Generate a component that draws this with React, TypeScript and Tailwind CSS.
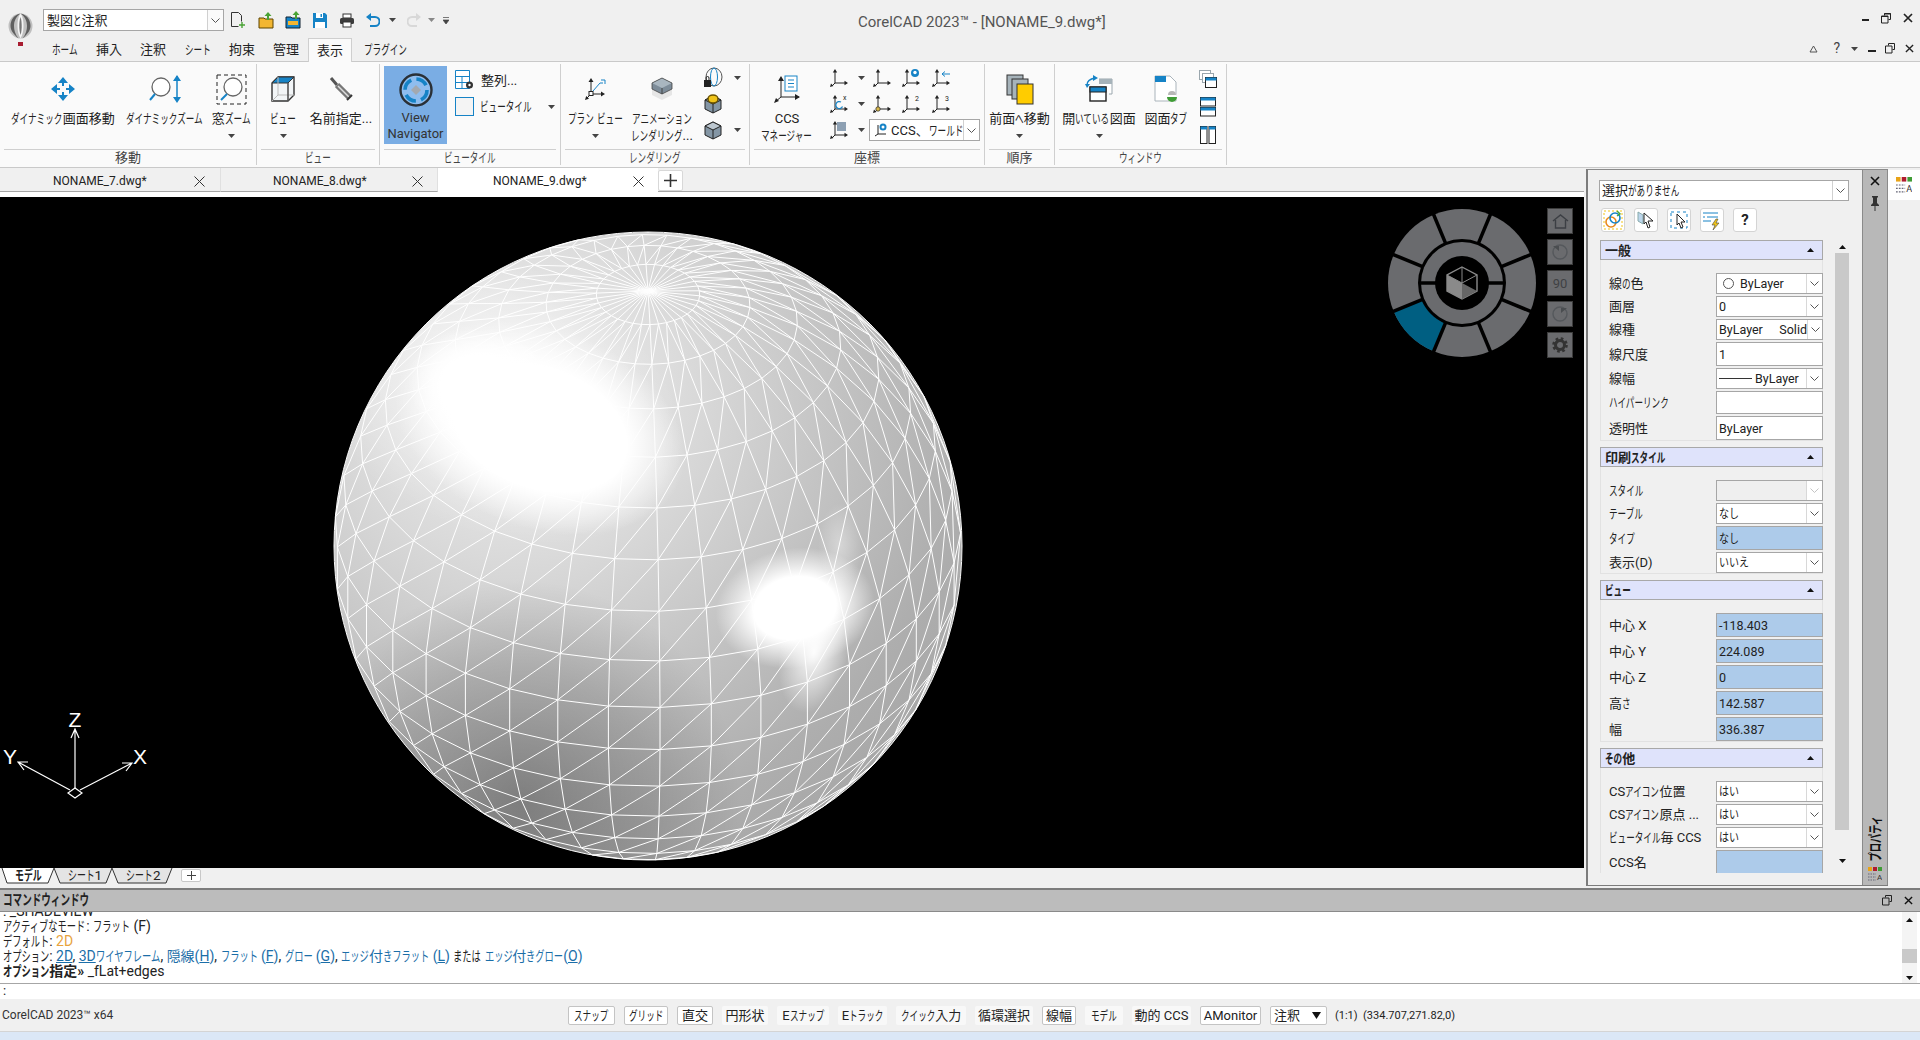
import type { ReactNode } from "react";

// Meiryo-style squeezed kana: kanji stay full width, kana runs get narrowed
function T({ children, wide = false }: { children: string; wide?: boolean }) {
  const parts = children.split(/([\u3040-\u30ff]+)/);
  return (
    <span className="whitespace-pre">
      {parts.map((p, i) =>
        /^[\u3040-\u30ff]+$/.test(p) ? (
          <span
            key={i}
            className={`inline-block origin-left whitespace-nowrap ${wide ? "scale-x-[.8]" : "scale-x-[.66]"}`}
            style={{ width: `${p.length * (wide ? 0.8 : 0.66)}em` }}
          >
            {p}
          </span>
        ) : (
          p
        )
      )}
    </span>
  );
}

const Caret = ({ up = false, c = "#444" }: { up?: boolean; c?: string }) => (
  <svg width="7" height="4" viewBox="0 0 7 4" className="shrink-0">
    <path d={up ? "M0 4L3.5 0 7 4z" : "M0 0h7L3.5 4z"} fill={c} />
  </svg>
);

const Chevron = ({ c = "#555" }: { c?: string }) => (
  <svg width="9" height="5" viewBox="0 0 9 5">
    <path d="M.5.5l4 4 4-4" fill="none" stroke={c} />
  </svg>
);

// ---- ribbon icons ----
const MoveIcon = () => (
  <svg width="26" height="26" viewBox="0 0 26 26">
    <path d="M13 1l5 6h-4v3h-2V7H8zM13 25l5-6h-4v-3h-2v3H8zM1 13l6-5v4h3v2H7v4zM25 13l-6-5v4h-3v2h3v4z" fill="#1683c6" />
  </svg>
);
const DynZoomIcon = () => (
  <svg width="32" height="30" viewBox="0 0 32 30">
    <circle cx="12" cy="13" r="9" fill="#fff" stroke="#666" strokeWidth="1.3" />
    <path d="M6 20l-5 6" stroke="#1683c6" strokeWidth="2" />
    <path d="M28 2v25" stroke="#1683c6" strokeWidth="1.5" />
    <path d="M28 1l4 6h-8zM28 29l4-6h-8z" fill="#1683c6" />
  </svg>
);
const WinZoomIcon = () => (
  <svg width="31" height="31" viewBox="0 0 31 31">
    <rect x="1" y="1" width="29" height="29" fill="none" stroke="#222" strokeDasharray="4 3" />
    <circle cx="17" cy="13" r="9" fill="#fff" stroke="#666" strokeWidth="1.3" />
    <path d="M11 20l-6 6" stroke="#1683c6" strokeWidth="2" />
  </svg>
);
const CubeIcon = () => (
  <svg width="26" height="28" viewBox="0 0 26 28">
    <path d="M2 8l6-6h16v18l-6 6H2z" fill="#f2f5f7" stroke="#333" strokeWidth="1.4" />
    <path d="M2 8l6-6h16l-6 6z" fill="#1683c6" stroke="#333" />
    <path d="M18 8v18M8 2v18l-6 6M8 20h16" fill="none" stroke="#bbb" />
    <path d="M18 8v18" stroke="#333" strokeWidth="1.2" />
  </svg>
);
const PenIcon = () => (
  <svg width="24" height="26" viewBox="0 0 24 26">
    <path d="M2 2l6 7" stroke="#555" strokeWidth="3" />
    <path d="M8 9l12 12" stroke="#777" strokeWidth="6" />
    <path d="M9 10l11 11" stroke="#ddd" strokeWidth="1.5" />
    <path d="M18 24l5-5" stroke="#333" strokeWidth="2" />
  </svg>
);
const NavIcon = () => (
  <svg width="34" height="36" viewBox="0 0 34 36">
    <circle cx="17" cy="18" r="15.5" fill="#8fbdee" stroke="#2a3036" strokeWidth="2.4" />
    <circle cx="17" cy="18" r="11" fill="none" stroke="#1683c6" strokeWidth="3.6" strokeDasharray="12 5.3" />
    <path d="M17 13l5 5-5 5-5-5z" fill="#a3a9b0" />
  </svg>
);
const TileIcon = () => (
  <svg width="20" height="20" viewBox="0 0 20 20">
    <path d="M.5.5h14v18H.5zM.5 6.5h14M.5 12.5h14M7 6.5v12" fill="#fff" stroke="#1683c6" />
    <circle cx="14.5" cy="15" r="3.5" fill="#333" />
    <circle cx="14.5" cy="15" r="1.2" fill="#fff" />
  </svg>
);
const Ax = ({ children }: { children?: ReactNode }) => (
  <svg width="18" height="18" viewBox="0 0 18 18" className="shrink-0">
    <path d="M5 2v12M5 14h11M5 14l-3 3" fill="none" stroke="#222" />
    <path d="M5 0l2.200 3.500H2.800zM18 14l-3.500 2.200v-4.400zM0 18l1-3.500 2.500 2.500z" fill="#222" />
    {children}
  </svg>
);
const AnimCube = () => (
  <svg width="22" height="24" viewBox="0 0 22 24">
    <path d="M11 1l10 5v12l-10 5-10-5V6z" fill="#e6e6e6" />
    <path d="M11 1l10 5v6l-10 5-10-5V6z" fill="#7d8c99" />
    <path d="M11 1l10 5-10 5L1 6z" fill="#a9b6c0" />
    <path d="M11 11v6" stroke="#444" />
    <path d="M11 1l10 5v6l-10 5-10-5V6z" fill="none" stroke="#444" strokeWidth=".8" />
  </svg>
);
const SmallCube = ({ ring = false }: { ring?: boolean }) => (
  <svg width="18" height="20" viewBox="0 0 18 20">
    <path d="M9 2l8 4v9l-8 4-8-4V6z" fill="#8496a5" stroke="#222" />
    <path d="M9 2l8 4-8 4-8-4zM9 10v9" fill={ring ? "#8496a5" : "#bcc7d0"} stroke="#222" />
    {ring && <ellipse cx="9" cy="5" rx="5" ry="4" fill="#f0c419" stroke="#6b5300" strokeWidth="1.4" />}
  </svg>
);
const Stack = () => (
  <svg width="28" height="31" viewBox="0 0 28 31">
    <rect x="1" y="1" width="16" height="20" fill="#a6b3ba" stroke="#333" />
    <rect x="6" y="5" width="16" height="20" fill="#a6b3ba" stroke="#333" />
    <rect x="11" y="10" width="16" height="20" fill="#ffcc00" stroke="#333" />
  </svg>
);
const OpenDocs = () => (
  <svg width="28" height="28" viewBox="0 0 28 28">
    <path d="M14 4h13v15h-3" fill="#fff" stroke="#9aa6ad" />
    <rect x="14" y="4" width="13" height="5" fill="#a6b3ba" />
    <rect x="5" y="12" width="16" height="14" fill="#fff" stroke="#222" strokeWidth="1.4" />
    <rect x="5" y="12" width="16" height="5" fill="#1683c6" stroke="#222" />
    <path d="M2 10c0-4 3-6 8-7" fill="none" stroke="#1683c6" strokeWidth="1.4" />
    <path d="M13 3L8 0v6zM2 13l-2-4h5z" fill="#1683c6" />
  </svg>
);
const TabDoc = () => (
  <svg width="24" height="28" viewBox="0 0 24 28">
    <path d="M1 1h15l6 6v19H1z" fill="#fff" stroke="#aab4bb" />
    <rect x="1" y="1" width="11" height="6" fill="#1683c6" />
    <circle cx="18" cy="22" r="5" fill="#fff" />
    <path d="M13 22h10a5 5 0 0 1-10 0z" fill="#3f9c35" />
    <path d="M14 20a4 4 0 0 1 8 0z" fill="#b7b7b7" />
  </svg>
);
const WinA = () => (
  <svg width="18" height="18" viewBox="0 0 18 18">
    <rect x=".5" y=".5" width="11" height="9" fill="#fff" stroke="#9aa6ad" />
    <rect x="3.5" y="3.5" width="11" height="9" fill="#fff" stroke="#9aa6ad" />
    <rect x="6.5" y="7.5" width="11" height="10" fill="#fff" stroke="#222" />
    <rect x="6.5" y="7.5" width="11" height="3" fill="#1683c6" />
  </svg>
);
const WinB = () => (
  <svg width="16" height="20" viewBox="0 0 16 20">
    <rect x=".5" y=".5" width="15" height="8.5" fill="#fff" stroke="#222" />
    <rect x=".5" y=".5" width="15" height="3" fill="#1683c6" />
    <rect x=".5" y="10.5" width="15" height="8.5" fill="#fff" stroke="#222" />
    <rect x=".5" y="10.5" width="15" height="3" fill="#1683c6" />
  </svg>
);
const WinC = () => (
  <svg width="16" height="18" viewBox="0 0 16 18">
    <rect x=".5" y=".5" width="6.5" height="17" fill="#fff" stroke="#222" />
    <rect x=".5" y=".5" width="6.5" height="3" fill="#1683c6" />
    <rect x="9" y=".5" width="6.5" height="17" fill="#fff" stroke="#222" />
    <rect x="9" y=".5" width="6.5" height="3" fill="#1683c6" />
  </svg>
);

// ---- quick access icons ----
const quick = [
  { cls: "ml-[6px]", icon: <svg width="16" height="18" viewBox="0 0 16 18"><path d="M1.5 1.5h7l3 3v6M1.5 1.5v14h7" fill="none" stroke="#333" /><path d="M12 11v6M9 14h6" stroke="#4aa335" strokeWidth="1.4" /></svg> },
  { cls: "ml-[12px]", icon: <svg width="16" height="18" viewBox="0 0 16 18"><path d="M1 7h5l1 1h8v9H1z" fill="#f2b632" stroke="#5d4500" /><path d="M10 1l3.5 4H11v4H9V5H6.5z" fill="#4aa335" /></svg> },
  { cls: "ml-[11px]", icon: <svg width="16" height="18" viewBox="0 0 16 18"><path d="M1 6h5l1 1h8v10H1z" fill="#1683c6" stroke="#123" /><path d="M3 10h10v4H3z" fill="#f2b632" /><path d="M11 0l3.5 4H12v4h-2V4H7.5z" fill="#4aa335" /></svg> },
  { cls: "ml-[11px]", icon: <svg width="16" height="17" viewBox="0 0 16 17"><path d="M1 1h12l2 2v13H1z" fill="#1683c6" /><path d="M4 1h7v5H4zM3 10h10v6H3z" fill="#fff" /><path d="M8.5 2h1.5v3H8.500z" fill="#1683c6" /></svg> },
  { cls: "ml-[11px]", icon: <svg width="16" height="15" viewBox="0 0 16 15"><rect x="4" y="1" width="8" height="4" fill="#fff" stroke="#333" /><rect x="1" y="5" width="14" height="6" rx="1.500" fill="#3c3c3c" /><rect x="4" y="9" width="8" height="5" fill="#fff" stroke="#333" /></svg> },
  { cls: "ml-[11px]", icon: <svg width="14" height="16" viewBox="0 0 14 16"><path d="M3 5h6a4 4 0 0 1 0 9H4" fill="none" stroke="#1683c6" strokeWidth="2" /><path d="M0 5l5-4v8z" fill="#1683c6" /></svg> },
  { cls: "ml-[9px]", icon: <Caret /> },
  { cls: "ml-[11px]", icon: <svg width="14" height="16" viewBox="0 0 14 16"><path d="M11 5H5a4 4 0 0 0 0 9h5" fill="none" stroke="#d8d8d8" strokeWidth="2" /><path d="M14 5L9 1v8z" fill="#d8d8d8" /></svg> },
  { cls: "ml-[7px]", icon: <Caret c="#888" /> },
  { cls: "ml-[8px]", icon: <svg width="6" height="7" viewBox="0 0 6 7"><path d="M0 .5h6M0 3h6L3 7z" fill="#444" stroke="#444" strokeWidth=".7" /></svg> },
];

const ribbonTabs = [
  { t: "ホーム", c: "w-[44px]" }, { t: "挿入", c: "w-[44px]" }, { t: "注釈", c: "w-[44px]" }, { t: "シート", c: "w-[45px]" },
  { t: "拘束", c: "w-[44px]" }, { t: "管理", c: "w-[44px]" },
];

function Group({ w, title, children }: { w: string; title: string; children: ReactNode }) {
  return (
    <div className={`${w} flex flex-col relative shrink-0 px-[4px]`}>
      <div className="h-[87px] flex -mx-[4px]">{children}</div>
      <div className="border-t border-[#cfcfcf] h-[17px] text-center text-[13px] leading-[15px] text-[#444]">
        <T>{title}</T>
      </div>
    </div>
  );
}
const Sep = () => <div className="w-px my-[2px] bg-[#cfcfcf] shrink-0" />;

function Big({ w, icon, l1, l2, caret }: { w: string; icon: ReactNode; l1: string; l2?: string; caret?: boolean }) {
  return (
    <div className={`${w} shrink-0 flex flex-col items-center pt-[11px] whitespace-nowrap`}>
      <div className="h-[32px] flex items-center justify-center">{icon}</div>
      <div className="mt-[5px] h-[17px] text-center"><T>{l1}</T></div>
      <div className="h-[17px] flex items-center justify-center text-center">
        {l2 ? <T>{l2}</T> : caret ? <Caret /> : null}
      </div>
    </div>
  );
}

// ---- properties panel data ----
type Row = { label: string; h: string; kind: "combo" | "text" | "blue" | "off"; value?: ReactNode };
const sections: { title: string; pt: string; mt: string; rows: Row[] }[] = [
  {
    title: "一般", pt: "pt-[13px]", mt: "",
    rows: [
      { label: "線の色", h: "h-[21px]", kind: "combo", value: <span className="flex items-center"><span className="w-[11px] h-[11px] rounded-full border border-[#555] ml-[4px] mr-[6px]" />ByLayer</span> },
      { label: "画層", h: "h-[21px]", kind: "combo", value: "0" },
      { label: "線種", h: "h-[21px]", kind: "combo", value: <span className="flex justify-between w-[88px]"><span>ByLayer</span><span>Solid</span></span> },
      { label: "線尺度", h: "h-[24px]", kind: "text", value: "1" },
      { label: "線幅", h: "h-[21px]", kind: "combo", value: <span className="flex items-center"><span className="w-[33px] h-px bg-[#333] mr-[3px]" />ByLayer</span> },
      { label: "ハイパーリンク", h: "h-[23px]", kind: "text" },
      { label: "透明性", h: "h-[24px]", kind: "text", value: "ByLayer" },
    ],
  },
  {
    title: "印刷スタイル", pt: "pt-[13px]", mt: "mt-[6px]",
    rows: [
      { label: "スタイル", h: "h-[21px]", kind: "off" },
      { label: "テーブル", h: "h-[21px]", kind: "combo", value: "なし" },
      { label: "タイプ", h: "h-[24px]", kind: "blue", value: "なし" },
      { label: "表示(D)", h: "h-[21px]", kind: "combo", value: "いいえ" },
    ],
  },
  {
    title: "ビュー", pt: "pt-[13px]", mt: "mt-[6px]",
    rows: [
      { label: "中心 X", h: "h-[24px]", kind: "blue", value: "-118.403" },
      { label: "中心 Y", h: "h-[24px]", kind: "blue", value: "224.089" },
      { label: "中心 Z", h: "h-[24px]", kind: "blue", value: "0" },
      { label: "高さ", h: "h-[24px]", kind: "blue", value: "142.587" },
      { label: "幅", h: "h-[24px]", kind: "blue", value: "336.387" },
    ],
  },
  {
    title: "その他", pt: "pt-[13px]", mt: "mt-[6px]",
    rows: [
      { label: "CSアイコン位置", h: "h-[21px]", kind: "combo", value: "はい" },
      { label: "CSアイコン原点 ...", h: "h-[21px]", kind: "combo", value: "はい" },
      { label: "ビュータイル毎 CCS", h: "h-[21px]", kind: "combo", value: "はい" },
      { label: "CCS名", h: "h-[24px]", kind: "blue" },
    ],
  },
];

function PropRow({ r }: { r: Row }) {
  const bg = r.kind === "blue" ? "bg-[#adcbea]" : r.kind === "off" ? "bg-[#efefef]" : "bg-white";
  return (
    <div className={`${r.h} flex items-center shrink-0`}>
      <div className="w-[116px] pl-[9px] text-[#222] whitespace-nowrap"><T>{r.label}</T></div>
      <div className={`${bg} h-full w-[107px] border border-[#a6a6a6] flex items-center justify-between overflow-hidden text-[12.5px]`}>
        <div className="pl-[2px] whitespace-nowrap">
          {typeof r.value === "string" ? <T wide>{r.value}</T> : r.value}
        </div>
        {(r.kind === "combo" || r.kind === "off") && (
          <div className="w-[16px] h-full bg-white border-l border-[#d8d8d8] flex items-center justify-center shrink-0">
            <Chevron c={r.kind === "off" ? "#c4c4c4" : "#555"} />
          </div>
        )}
      </div>
    </div>
  );
}

const statusItems = [
  { t: "スナップ", c: "w-[47px]", on: true }, { t: "グリッド", c: "w-[44px]", on: true }, { t: "直交", c: "w-[36px]", on: true },
  { t: "円形状", c: "w-[46px]" }, { t: "Eスナップ", c: "w-[52px]" }, { t: "Eトラック", c: "w-[49px]" }, { t: "クイック入力", c: "w-[70px]" },
  { t: "循環選択", c: "w-[58px]" }, { t: "線幅", c: "w-[34px]", on: true }, { t: "モデル", c: "w-[38px]" }, { t: "動的 CCS", c: "w-[59px]" },
  { t: "AMonitor", c: "w-[61px]", on: true },
];

// ---- sphere mesh ----
const R = 314, CX = 648, CY = 546;
function buildMesh() {
  const bands = 19, lons = 38;
  const beta = (54.3 * Math.PI) / 180;
  const off = (2.2 * Math.PI) / 180;
  const pt = (i: number, k: number) => {
    const a = (i * Math.PI) / bands;
    const l = off + (k * 2 * Math.PI) / lons;
    const x = Math.sin(a) * Math.sin(l), y = Math.cos(a), z = Math.sin(a) * Math.cos(l);
    const yy = y * Math.sin(beta) - z * Math.cos(beta);
    const zz = y * Math.cos(beta) + z * Math.sin(beta);
    return { X: CX + R * x, Y: CY - R * yy, z: zz };
  };
  let d = "";
  const seg = (a: ReturnType<typeof pt>, b: ReturnType<typeof pt>) => {
    if (a.z < -0.01 || b.z < -0.01) return;
    d += `M${a.X.toFixed(1)} ${a.Y.toFixed(1)}L${b.X.toFixed(1)} ${b.Y.toFixed(1)}`;
  };
  for (let i = 0; i < bands; i++) {
    for (let k = 0; k < lons; k++) {
      seg(pt(i, k), pt(i + 1, k));
      if (i + 1 < bands) seg(pt(i + 1, k), pt(i + 1, k + 1));
      if (i > 0 && i + 1 < bands) seg(pt(i + 1, k), pt(i, k + 1));
    }
  }
  return d;
}
const meshPath = buildMesh();

function Sphere() {
  return (
    <svg className="absolute inset-0 w-full h-full" viewBox="0 197 1584 671">
      <defs>
        <clipPath id="ball"><circle cx={CX} cy={CY} r={R} /></clipPath>
        <radialGradient id="base" gradientUnits="userSpaceOnUse" cx="520" cy="390" r="560">
          <stop offset="0" stopColor="#f2f2f2" />
          <stop offset=".3" stopColor="#dadada" />
          <stop offset=".55" stopColor="#c4c4c4" />
          <stop offset=".8" stopColor="#aeaeae" />
          <stop offset="1" stopColor="#a4a4a4" />
        </radialGradient>
        <radialGradient id="dark" gradientUnits="userSpaceOnUse" cx="520" cy="800" r="220">
          <stop offset="0" stopColor="#000" stopOpacity=".3" />
          <stop offset=".6" stopColor="#000" stopOpacity=".14" />
          <stop offset="1" stopColor="#000" stopOpacity="0" />
        </radialGradient>
        <radialGradient id="glow">
          <stop offset=".6" stopColor="#fff" />
          <stop offset="1" stopColor="#fff" stopOpacity="0" />
        </radialGradient>
        <radialGradient id="glowMid">
          <stop offset=".52" stopColor="#fff" />
          <stop offset="1" stopColor="#fff" stopOpacity="0" />
        </radialGradient>
        <radialGradient id="glowSoft">
          <stop offset="0" stopColor="#fff" stopOpacity=".95" />
          <stop offset="1" stopColor="#fff" stopOpacity="0" />
        </radialGradient>
      </defs>
      <g clipPath="url(#ball)">
        <circle cx={CX} cy={CY} r={R} fill="url(#base)" />
        <circle cx={CX} cy={CY} r={R} fill="url(#dark)" />
        <ellipse cx="490" cy="395" rx="205" ry="135" fill="url(#glowSoft)" transform="rotate(25 490 395)" opacity=".75" />
        <ellipse cx="540" cy="428" rx="150" ry="100" fill="url(#glow)" transform="rotate(20 540 428)" />
        <ellipse cx="490" cy="395" rx="85" ry="62" fill="url(#glow)" transform="rotate(22 490 395)" />
        <ellipse cx="795" cy="608" rx="80" ry="60" fill="url(#glowMid)" transform="rotate(-10 795 608)" />
        <ellipse cx="814" cy="652" rx="34" ry="62" fill="url(#glowSoft)" transform="rotate(12 814 652)" />
        <ellipse cx="840" cy="545" rx="22" ry="42" fill="url(#glowSoft)" opacity=".4" />
      </g>
      <path d={meshPath} fill="none" stroke="#fff" strokeWidth="1" />
      <circle cx={CX} cy={CY} r={R} fill="none" stroke="#fff" strokeWidth="1" />
      {/* ucs icon */}
      <g stroke="#fff" strokeWidth="1.2" fill="none">
        <path d="M75 789V730M71 738l4-9 4 9" />
        <path d="M80 790l52-27M122 763h10l-6 8" />
        <path d="M70 790L18 762M28 762h-10l6 8" />
        <path d="M75 788l7 5-7 5-7-5z" />
      </g>
      <g fill="#fff" fontSize="21" fontFamily="'Liberation Sans',sans-serif" textAnchor="middle">
        <text x="75" y="727">Z</text>
        <text x="140" y="764">X</text>
        <text x="10" y="764">Y</text>
      </g>
    </svg>
  );
}

function Wheel() {
  const seps = [22.5, 67.5, 112.5, 157.5, 202.5, 247.5, 292.5, 337.5];
  const p = (r: number, a: number) => `${(r * Math.cos((a * Math.PI) / 180)).toFixed(2)} ${(r * Math.sin((a * Math.PI) / 180)).toFixed(2)}`;
  return (
    <svg width="150" height="150" viewBox="-75 -75 150 150">
      <circle r="74" fill="#6a6b6e" />
      <path d={`M${p(44, 112.5)}L${p(74, 112.5)}A74 74 0 0 1 ${p(74, 157.5)}L${p(44, 157.5)}z`} fill="#005f82" />
      {seps.map((a) => (
        <path key={a} d={`M${p(42, a)}L${p(75, a)}`} stroke="#000" strokeWidth="3.5" />
      ))}
      <circle r="44" fill="#000" />
      <circle r="41" fill="#6a6b6e" />
      <path d="M-42 0h84" stroke="#000" strokeWidth="3.500" />
      <circle r="27" fill="#000" />
      <path d="M0 -16L15 -8V8L0 16L-15 8V-8z" fill="#000" stroke="#8a8a8a" strokeWidth="1.4" />
      <path d="M-15 -8L0 0L0 16L-15 8z" fill="#8a8a8a" />
      <path d="M0 0L15 8V8L0 16z" fill="#666" />
      <path d="M0 0L15 -8M0 0L0 -16M0 0L-15 -8" stroke="#8a8a8a" strokeWidth="1" fill="none" />
    </svg>
  );
}

const navBtn = "w-[26px] h-[26px] bg-[#6a6b6e] border border-[#3c3c3c] flex items-center justify-center";

const docTabs = [
  { n: "NONAME_7.dwg*", c: "w-[219px] pl-[51px] pr-[15px]" },
  { n: "NONAME_8.dwg*", c: "w-[217px] pl-[52px] pr-[14px]" },
];

export default function App() {
  return (
    <div className="w-[1920px] h-[1040px] overflow-hidden flex flex-col bg-[#f0f0f0] text-[13px] leading-[17px] text-[#222] font-['Roboto','Noto_Sans_CJK_JP',sans-serif]">
      {/* title + ribbon tabs */}
      <div className="h-[61px] flex shrink-0">
        <div className="w-[43px] pl-[8px] pt-[13px] shrink-0">
          <svg width="25" height="33" viewBox="0 0 25 33">
            <ellipse cx="12.500" cy="13" rx="12" ry="12.500" fill="#bfbfbf" />
            <path d="M12.500 .5C5 2 2.500 8 2.500 13c0 5 4 9 8 12.500C7 21 6 17 6 13 6 8 8 3.500 12.500.5zM12.500.5C20 2 22.500 8 22.500 13c0 5-4 9-8 12.500 3.500-4.500 4.500-8.500 4.500-12.500 0-5-2-9.500-6.500-12.500z" fill="#5f5f5f" />
            <path d="M12.500 .5c-2.500 3-3 8-3 12.500s1 9 3 12.500c2-3.500 3-8 3-12.500S15 3.500 12.500.5z" fill="#f4f4f4" />
            <path d="M12.500 4c-1 3-1.200 6-1.200 9s.300 6 1.200 9c1-3 1.200-6 1.200-9s-.200-6-1.200-9z" fill="#777" />
            <rect x="10" y="29" width="5" height="4" fill="#a81c30" />
          </svg>
        </div>
        <div className="flex-1 flex flex-col min-w-0">
          <div className="h-[38px] flex items-start pt-[9px] relative">
            <div className="w-[181px] h-[22px] bg-white border border-[#a6a6a6] flex items-center justify-between pl-[3px] shrink-0">
              <T>製図と注釈</T>
              <div className="w-[16px] h-full border-l border-[#d0d0d0] bg-[#fafafa] flex items-center justify-center"><Chevron /></div>
            </div>
            {quick.map((q, i) => (
              <div key={i} className={`${q.cls} h-[22px] flex items-center shrink-0`}>{q.icon}</div>
            ))}
            <div className="ml-[409px] text-[15px] text-[#555] leading-[26px] whitespace-nowrap">CorelCAD 2023™ - [NONAME_9.dwg*]</div>
            <div className="ml-auto flex items-center gap-[12px] h-[18px] pr-[7px]">
              <span className="w-[7px] h-[2px] bg-[#222] mt-[3px]" />
              <svg width="10" height="11" viewBox="0 0 10 11"><path d="M3.500 2.500V.5h6v6H7.500M.5 3h6.500v7H.5z" fill="none" stroke="#222" /><path d="M3 1h7M0 3.500h7" stroke="#222" /></svg>
              <svg width="10" height="10" viewBox="0 0 10 10"><path d="M1 1l8 8M9 1l-8 8" stroke="#222" strokeWidth="1.700" /></svg>
            </div>
          </div>
          <div className="h-[23px] flex items-end relative">
            {ribbonTabs.map((t) => (
              <div key={t.t} className={`${t.c} h-[23px] flex items-center justify-center`}><T>{t.t}</T></div>
            ))}
            <div className="w-[44px] h-[24px] -mb-px bg-[#fafafa] border border-b-0 border-[#cfcfcf] flex items-center justify-center relative z-10"><T>表示</T></div>
            <div className="w-[66px] h-[23px] flex items-center justify-center"><T>プラグイン</T></div>
            <div className="ml-auto flex items-center h-[23px] pr-[6px] pb-[2px]">
              <svg width="9" height="8" viewBox="0 0 9 8"><path d="M1 7l3.500-6L8 7z" fill="none" stroke="#555" /></svg>
              <span className="ml-[15px] text-[14px] text-[#444]">?</span>
              <span className="ml-[11px]"><Caret /></span>
              <span className="ml-[10px] w-[8px] h-[2px] bg-[#222] mt-[5px]" />
              <svg className="ml-[9px]" width="10" height="11" viewBox="0 0 10 11"><path d="M3.500 2.500V.5h6v6H7.500M.5 3h6.500v7H.5z" fill="none" stroke="#222" /></svg>
              <svg className="ml-[10px]" width="9" height="9" viewBox="0 0 10 10"><path d="M1 1l8 8M9 1l-8 8" stroke="#222" strokeWidth="1.500" /></svg>
            </div>
          </div>
        </div>
      </div>

      {/* ribbon */}
      <div className="h-[107px] shrink-0 bg-[#fafafa] border-y border-[#c9c9c9] flex">
        <Group w="w-[256px]" title="移動">
          <div className="w-[4px] shrink-0" />
          <Big w="w-[118px]" icon={<MoveIcon />} l1="ダイナミック画面移動" />
          <Big w="w-[86px]" icon={<DynZoomIcon />} l1="ダイナミックズーム" />
          <Big w="w-[46px]" icon={<WinZoomIcon />} l1="窓ズーム" caret />
        </Group>
        <Sep />
        <Group w="w-[122px]" title="ビュー">
          <Big w="w-[52px]" icon={<CubeIcon />} l1="ビュー" caret />
          <Big w="w-[64px]" icon={<PenIcon />} l1="名前指定..." />
        </Group>
        <Sep />
        <Group w="w-[180px]" title="ビュータイル">
          <div className="ml-[4px] mt-[4px] w-[63px] h-[78px] bg-[#7aade4] flex flex-col items-center pt-[6px] shrink-0 text-[#333]">
            <div className="h-[36px] flex items-center"><NavIcon /></div>
            <div className="mt-[1px]">View</div>
            <div className="-mt-[1px]">Navigator</div>
          </div>
          <div className="ml-[8px] pt-[8px] flex flex-col gap-[7px] flex-1">
            <div className="flex items-center gap-[6px]"><TileIcon /><T>整列...</T></div>
            <div className="flex items-center gap-[6px]">
              <span className="w-[19px] h-[19px] border border-[#1683c6] bg-[#f4f4f4]" />
              <T>ビュータイル</T>
              <span className="ml-[11px]"><Caret /></span>
            </div>
          </div>
        </Group>
        <Sep />
        <Group w="w-[188px]" title="レンダリング">
          <Big w="w-[68px]" icon={<svg width="22" height="24" viewBox="0 0 22 24"><path d="M7 4v13M7 17h11M7 17l-4 4" fill="none" stroke="#222" /><path d="M7 1l2.500 4h-5zM21 17l-4 2.500v-5zM1 23l1.200-4 2.800 2.800z" fill="#222" /><rect x="5" y="14.500" width="4" height="4" fill="#fff" stroke="#222" /><path d="M9 14l7-8h3M17 3h4v4" fill="none" stroke="#1683c6" /></svg>} l1="プラン ビュー" caret />
          <Big w="w-[66px]" icon={<AnimCube />} l1="アニメーション" l2="レンダリング..." />
          <div className="ml-[8px] pt-[6px] flex flex-col gap-[6px]">
            <div className="h-[20px] flex items-center gap-[11px]">
              <svg width="20" height="22" viewBox="0 0 20 22"><ellipse cx="11" cy="10" rx="8" ry="9" fill="none" stroke="#555" /><ellipse cx="11" cy="10" rx="3.500" ry="9" fill="none" stroke="#1683c6" /><rect x="1" y="13" width="7" height="7" fill="#222" /><path d="M3 13v-2a1.500 1.500 0 0 1 3 0v2" fill="none" stroke="#222" /></svg>
              <Caret />
            </div>
            <div className="h-[20px] flex items-center pl-[1px]"><SmallCube ring /></div>
            <div className="h-[20px] flex items-center gap-[12px] pl-[1px]"><SmallCube /><Caret /></div>
          </div>
        </Group>
        <Sep />
        <Group w="w-[234px]" title="座標">
          <Big w="w-[74px]" icon={<svg width="26" height="30" viewBox="0 0 26 30"><path d="M7 4v19M7 23h18M7 23l-6 5" fill="none" stroke="#222" /><path d="M7 2l3 5H4zM26 23l-5 3v-6zM0 29l2-5 3 3z" fill="#222" /><rect x="11" y="2" width="12" height="15" fill="#fff" stroke="#1683c6" /><path d="M14 6h6M14 9.500h6M14 13h6" stroke="#1683c6" /></svg>} l1="CCS" l2="マネージャー" />
          <div className="pt-[5px] flex flex-col gap-[4px] w-[160px] -ml-[1px]">
            <div className="h-[22px] flex items-center pl-[7px]">
              <Ax /><span className="ml-[10px]"><Caret /></span>
              <span className="ml-[8px]"><Ax /></span>
              <span className="ml-[11px]"><Ax><circle cx="13" cy="4" r="4" fill="#1683c6" /><circle cx="13" cy="3.500" r="1.700" fill="#fff" /></Ax></span>
              <span className="ml-[12px]"><Ax><path d="M10 5h8M13 2.500l-3 2.500 3 2.500" fill="none" stroke="#1683c6" /></Ax></span>
            </div>
            <div className="h-[22px] flex items-center pl-[7px]">
              <Ax><path d="M11 7a3.500 3.500 0 1 0 1.500 4.500" fill="none" stroke="#1683c6" strokeWidth="1.300" /><text x="13" y="5" fontSize="7" fill="#222">x</text></Ax>
              <span className="ml-[10px]"><Caret /></span>
              <span className="ml-[8px]"><Ax><circle cx="5" cy="14" r="2.200" fill="#d9b84a" stroke="#222" strokeWidth=".7" /></Ax></span>
              <span className="ml-[11px]"><Ax><text x="13" y="6" fontSize="7" fill="#222">2</text></Ax></span>
              <span className="ml-[12px]"><Ax><text x="13" y="6" fontSize="7" fill="#222">3</text></Ax></span>
            </div>
            <div className="h-[22px] flex items-center pl-[7px]">
              <Ax><rect x="7" y="1" width="9" height="9" fill="#8da0b3" /></Ax>
              <span className="ml-[10px]"><Caret /></span>
              <div className="ml-[4px] w-[111px] h-[22px] bg-white border border-[#a6a6a6] flex items-center justify-between pl-[4px] shrink-0 whitespace-nowrap">
                <span className="flex items-center gap-[3px]">
                  <svg width="14" height="14" viewBox="0 0 14 14"><path d="M4 2v9M4 11h8M4 11l-3 2" fill="none" stroke="#222" /><circle cx="9" cy="4" r="3.500" fill="#1683c6" /><circle cx="9" cy="4" r="1.500" fill="#fff" /></svg>
                  <T>CCS、ワールド</T>
                </span>
                <div className="w-[16px] h-full border-l border-[#d0d0d0] flex items-center justify-center shrink-0"><Chevron /></div>
              </div>
            </div>
          </div>
        </Group>
        <Sep />
        <Group w="w-[69px]" title="順序">
          <Big w="w-[69px]" icon={<Stack />} l1="前面へ移動" caret />
        </Group>
        <Sep />
        <Group w="w-[171px]" title="ウィンドウ">
          <Big w="w-[88px]" icon={<OpenDocs />} l1="開いている図面" caret />
          <Big w="w-[46px]" icon={<TabDoc />} l1="図面タブ" />
          <div className="w-[37px] pt-[8px] flex flex-col items-center gap-[9px]">
            <WinA /><WinB /><WinC />
          </div>
        </Group>
        <Sep />
      </div>

      {/* document area + properties */}
      <div className="h-[720px] flex shrink-0">
        <div className="w-[1584px] shrink-0 flex flex-col">
          <div className="h-[29px] bg-white flex items-start text-[12px]">
            <div className="h-[24px] w-[2px] bg-[#f0f0f0] border-b border-[#a6a6a6]" />
            {docTabs.map((d) => (
              <div key={d.n} className={`${d.c} h-[24px] pt-[3px] bg-[#f0f0f0] border-b border-r border-[#a6a6a6] border-r-[#e0e0e0] flex items-center justify-between`}>
                <span>{d.n}</span>
                <svg width="11" height="11" viewBox="0 0 11 11"><path d="M.5.5l10 10M10.500.5l-10 10" stroke="#333" /></svg>
              </div>
            ))}
            <div className="w-[220px] h-[29px] bg-white flex items-start pt-[5px] pl-[55px] pr-[14px] justify-between">
              <span>NONAME_9.dwg*</span>
              <svg className="mt-[3px]" width="11" height="11" viewBox="0 0 11 11"><path d="M.5.5l10 10M10.500.5l-10 10" stroke="#333" /></svg>
            </div>
            <div className="flex-1 h-[24px] bg-[#f0f0f0] border-b border-[#a6a6a6] flex items-start">
              <div className="w-[25px] h-[21px] mt-[2px] bg-white border border-[#d8d8d8] rounded-[2px] flex items-center justify-center">
                <svg width="13" height="13" viewBox="0 0 13 13"><path d="M6.500 0v13M0 6.500h13" stroke="#333" strokeWidth="1.600" /></svg>
              </div>
            </div>
          </div>
          <div className="relative h-[671px] bg-black overflow-hidden shrink-0">
            <Sphere />
            <div className="absolute left-[1387px] top-[11px]"><Wheel /></div>
            <div className="absolute left-[1547px] top-[11px] flex flex-col gap-[5px]">
              <div className={navBtn}><svg width="17" height="17" viewBox="0 0 17 17"><path d="M1 8l7.500-6L16 8M3.500 7v8h10V7" fill="none" stroke="#3c3f44" strokeWidth="1.400" /></svg></div>
              <div className={navBtn}><svg width="18" height="18" viewBox="0 0 18 18"><circle cx="9" cy="9" r="7" fill="none" stroke="#55585c" strokeWidth="1.400" /><path d="M2 3h6v5z" fill="#4a4d50" /></svg></div>
              <div className={`${navBtn} text-[13px] text-[#3f4144]`}>90</div>
              <div className={navBtn}><svg width="18" height="18" viewBox="0 0 18 18"><circle cx="9" cy="9" r="7" fill="none" stroke="#55585c" strokeWidth="1.400" /><path d="M16 3h-6v5z" fill="#4a4d50" /></svg></div>
              <div className={navBtn}><svg width="16" height="16" viewBox="0 0 16 16"><circle cx="8" cy="8" r="4.500" fill="none" stroke="#333" strokeWidth="3" /><circle cx="8" cy="8" r="6.500" fill="none" stroke="#333" strokeWidth="2.600" strokeDasharray="2.600 2.500" /></svg></div>
            </div>
          </div>
          {/* sheet tabs */}
          <div className="relative h-[18px] flex items-start text-[13.5px] leading-[15px]">
            <svg className="absolute left-0 top-0" width="176" height="16" viewBox="0 0 176 16">
              <path d="M54 0l6 15h46l6-15" fill="#e4e4e4" stroke="#333" />
              <path d="M112 0l6 15h48l6-15" fill="#e4e4e4" stroke="#333" />
              <path d="M2 0l5 15h41l6-15" fill="#fff" stroke="#333" />
            </svg>
            <div className="relative w-[56px] text-center font-bold pl-[1px]"><T>モデル</T></div>
            <div className="relative w-[57px] text-center pl-[1px]"><T>シート1</T></div>
            <div className="relative w-[59px] text-center pl-[2px]"><T>シート2</T></div>
            <div className="relative ml-[9px] mt-px w-[20px] h-[13px] bg-white border border-[#c8c8c8] rounded-[2px] flex items-center justify-center">
              <svg width="9" height="9" viewBox="0 0 9 9"><path d="M4.500 0v9M0 4.500h9" stroke="#444" /></svg>
            </div>
          </div>
          <div className="h-[2px]" />
        </div>

        {/* properties palette */}
        <div className="ml-[2px] mt-px h-[717px] w-[302px] flex border-t border-b border-l-2 border-[#7c7c7c] border-t-[#8a8a8a] shrink-0">
          <div className="w-[274px] shrink-0 flex flex-col">
            <div className="mt-[10px] ml-[11px] w-[250px] h-[21px] bg-white border border-[#a6a6a6] flex items-center justify-between pl-[2px]">
              <T>選択がありません</T>
              <div className="w-[16px] h-full border-l border-[#d0d0d0] flex items-center justify-center"><Chevron /></div>
            </div>
            <div className="mt-[7px] ml-[13px] h-[25px] flex gap-[9px]">
              <div className="w-[24px] h-[24px] bg-white border border-[#d4d4d4] rounded-[3px] flex items-center justify-center">
                <svg width="20" height="20" viewBox="0 0 20 20"><rect x="1" y="1" width="18" height="18" fill="none" stroke="#f0c419" strokeDasharray="2 2" /><circle cx="8" cy="12" r="5" fill="none" stroke="#e8891c" strokeWidth="1.600" /><circle cx="12" cy="8" r="5" fill="none" stroke="#1683c6" strokeWidth="1.600" /><path d="M14 1l3 3-3 2" fill="none" stroke="#4aa335" strokeWidth="1.400" /></svg>
              </div>
              <div className="w-[24px] h-[24px] bg-white border border-[#d4d4d4] rounded-[3px] flex items-center justify-center">
                <svg width="20" height="18" viewBox="0 0 20 18"><path d="M2 1l5 3v9l-5-3z" fill="#bcd6ec" stroke="#8aa" /><path d="M8 2l9 8h-5l2 6-2 1-2-6-2 2z" fill="#fff" stroke="#222" /></svg>
              </div>
              <div className="w-[24px] h-[24px] bg-white border border-[#d4d4d4] rounded-[3px] flex items-center justify-center">
                <svg width="18" height="18" viewBox="0 0 18 18"><rect x="1" y="1" width="16" height="16" fill="none" stroke="#1683c6" strokeDasharray="3 3" /><path d="M7 3l8 8h-4l2 5-2 1-2-5-2 2z" fill="#fff" stroke="#222" /></svg>
              </div>
              <div className="w-[24px] h-[24px] bg-white border border-[#d4d4d4] rounded-[3px] flex items-center justify-center">
                <svg width="20" height="20" viewBox="0 0 20 20"><path d="M1 3h15M1 7h2M5 7h11M1 11h8" stroke="#1683c6" /><path d="M14 9l-4 6h3l-2 5 6-7h-3l2-4z" fill="#f0c419" stroke="#444" strokeWidth=".6" /></svg>
              </div>
              <div className="w-[24px] h-[24px] bg-white border border-[#d4d4d4] rounded-[3px] flex items-center justify-center font-bold text-[15px]">?</div>
            </div>
            <div className="mt-[7px] ml-[12px] flex">
              <div className="w-[223px] h-[633px] overflow-hidden flex flex-col shrink-0">
                {sections.map((s) => (
                  <div key={s.title} className={`${s.mt} shrink-0 border-x border-b border-[#e2e2e2]`}>
                    <div className="-mx-px h-[20px] bg-[#dfe3fb] border border-[#a8a8a8] flex items-center justify-between pl-[4px] pr-[8px] font-bold">
                      <T>{s.title}</T>
                      <Caret up c="#111" />
                    </div>
                    <div className={`${s.pt} flex flex-col gap-[2px] -mx-px`}>
                      {s.rows.map((r) => <PropRow key={r.label} r={r} />)}
                    </div>
                  </div>
                ))}
              </div>
              <div className="ml-[12px] w-[14px] flex flex-col items-center pt-[5px]">
                <Caret up c="#111" />
                <div className="mt-[4px] w-[14px] h-[577px] bg-[#c9c9c9]" />
                <div className="mt-[29px]"><Caret c="#111" /></div>
              </div>
            </div>
          </div>
          <div className="w-[26px] shrink-0 bg-[#b8b8b8] border-x border-[#8a8a8a] flex flex-col items-center pt-[6px]">
            <svg width="10" height="10" viewBox="0 0 10 10"><path d="M1 1l8 8M9 1l-8 8" stroke="#111" strokeWidth="1.600" /></svg>
            <svg className="mt-[10px]" width="10" height="15" viewBox="0 0 10 15"><path d="M2 0h6v1.500H7V7l2 2v1H1V9l2-2V1.500H2zM4.500 10h1v5h-1z" fill="#333" /></svg>
            <div className="mt-auto h-[50px] flex items-center justify-center">
              <span className="-rotate-90 whitespace-nowrap font-bold text-[#111] text-[14px]"><T>プロパティ</T></span>
            </div>
            <svg className="mb-[4px] mt-[4px]" width="14" height="14" viewBox="0 0 14 14"><rect x="0" y="0" width="4" height="4" fill="#e8a317" /><rect x="5" y="0" width="4" height="4" fill="#b01c2e" /><rect x="10" y="0" width="4" height="4" fill="#3f9c35" /><path d="M0 7h8M0 10h8M0 13h8" stroke="#667" strokeDasharray="1.500 1" /><text x="9" y="13" fontSize="8" fill="#333">A</text></svg>
          </div>
          <div className="flex-1" />
        </div>
        <div className="flex-1 pt-[2px]">
          <div className="h-[30px] bg-white flex items-center justify-center">
            <svg width="16" height="16" viewBox="0 0 14 14"><rect x="0" y="0" width="4" height="4" fill="#e8a317" /><rect x="5" y="0" width="4" height="4" fill="#b01c2e" /><rect x="10" y="0" width="4" height="4" fill="#3f9c35" /><path d="M0 7h8M0 10h8M0 13h8" stroke="#667" strokeDasharray="1.500 1" /><text x="9" y="13" fontSize="8" fill="#333">A</text></svg>
          </div>
        </div>
      </div>

      {/* command window */}
      <div className="h-[24px] shrink-0 bg-[#bcbcbc] border-t-2 border-b border-[#7c7c7c] border-b-[#8a8a8a] flex items-center justify-between pl-[3px] pr-[7px] font-bold text-[14.5px]">
        <T>コマンドウィンドウ</T>
        <div className="flex items-center gap-[12px]">
          <svg width="10" height="11" viewBox="0 0 10 11"><path d="M3.500 2.500V.5h6v6H7.500M.5 3h6.500v7H.5z" fill="none" stroke="#222" /></svg>
          <svg width="9" height="9" viewBox="0 0 10 10"><path d="M1 1l8 8M9 1l-8 8" stroke="#111" strokeWidth="1.500" /></svg>
        </div>
      </div>
      <div className="h-[72px] shrink-0 bg-white flex border-b border-[#a6a6a6]">
        <div className="flex-1 flex flex-col justify-end overflow-hidden pl-[3px] pb-[4px] leading-[15px] text-[14px]">
          <div className="shrink-0">: _SHADEVIEW</div>
          <div className="shrink-0"><T>アクティブなモード: フラット (F)</T></div>
          <div className="shrink-0"><T>デフォルト: </T><span className="text-[#e8a33d]">2D</span></div>
          <div className="whitespace-nowrap shrink-0">
            <T>オプション: </T><span className="text-[#1b6ea8] underline">2D</span>, <span className="text-[#1b6ea8]"><span className="underline">3D</span><T>ワイヤフレーム</T></span>, <span className="text-[#1b6ea8]"><T>隠線(</T><span className="underline">H</span>)</span>, <span className="text-[#1b6ea8]"><T>フラット (</T><span className="underline">F</span>)</span>, <span className="text-[#1b6ea8]"><T>グロー (</T><span className="underline">G</span>)</span>, <span className="text-[#1b6ea8]"><T>エッジ付きフラット (</T><span className="underline">L</span>)</span> <T>または</T> <span className="text-[#1b6ea8]"><T>エッジ付きグロー(</T><span className="underline">O</span>)</span>
          </div>
          <div className="whitespace-nowrap shrink-0"><span className="font-bold"><T>オプション指定» </T></span>_fLat+edges</div>
        </div>
        <div className="w-[15px] mr-[3px] flex flex-col items-center pt-[6px] bg-[#f4f4f4]">
          <Caret up c="#111" />
          <div className="mt-[27px] w-[15px] h-[14px] bg-[#c9c9c9]" />
          <div className="mt-auto mb-[3px]"><Caret c="#111" /></div>
        </div>
      </div>
      <div className="h-[15px] shrink-0 bg-white pl-[3px] leading-[14px]">:</div>

      {/* status bar */}
      <div className="h-[32px] shrink-0 flex items-center bg-[#f0f0f0] text-[13px]">
        <div className="w-[568px] pl-[2px] shrink-0 text-[#333] text-[12px]">CorelCAD 2023™ x64</div>
        <div className="flex gap-[9px] items-center">
          {statusItems.map((s) => (
            <div key={s.t} className={`${s.c} h-[19px] rounded-[2px] flex items-center justify-center whitespace-nowrap ${s.on ? "bg-white border border-[#c4c4c4]" : "bg-[#f8f8f8]"}`}>
              <T>{s.t}</T>
            </div>
          ))}
          <div className="w-[57px] h-[19px] bg-white border border-[#c4c4c4] rounded-[2px] flex items-center justify-between pl-[3px] pr-[5px]">
            <T>注釈</T><svg width="9" height="7" viewBox="0 0 9 7"><path d="M0 0h9L4.500 7z" fill="#111" /></svg>
          </div>
        </div>
        <div className="ml-[8px] whitespace-nowrap text-[11px]">(1:1)&nbsp;&nbsp;(334.707,271.82,0)</div>
      </div>
      <div className="flex-1 bg-[#dbe7f6] border-t border-[#d4d4d4]" />
    </div>
  );
}
